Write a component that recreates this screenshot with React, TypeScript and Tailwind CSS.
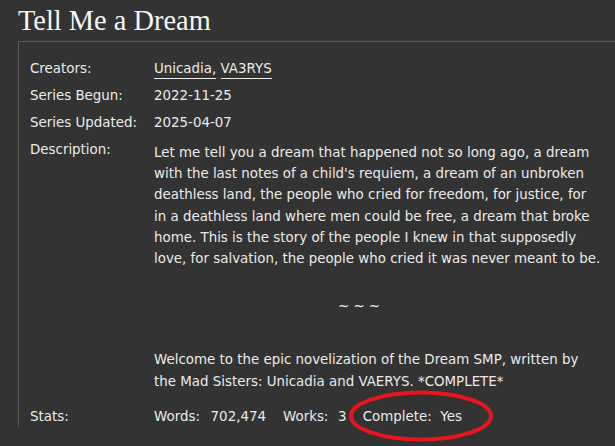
import React from "react";

const descLines = [
  "Let me tell you a dream that happened not so long ago, a dream",
  "with the last notes of a child's requiem, a dream of an unbroken",
  "deathless land, the people who cried for freedom, for justice, for",
  "in a deathless land where men could be free, a dream that broke",
  "home. This is the story of the people I knew in that supposedly",
  "love, for salvation, the people who cried it was never meant to be.",
];

function Row({ label, children, className = "" }: { label: string; children: React.ReactNode; className?: string }) {
  return (
    <div className={`flex ${className}`}>
      <div className="w-[124px] shrink-0">{label}</div>
      <div className="flex-1">{children}</div>
    </div>
  );
}

export default function App() {
  return (
    <div className="w-[615px] h-[446px] overflow-hidden bg-[#333333] text-[#ebebeb] relative">
      <h1
        className="pl-[18px] pt-[2px] text-[28.4px] leading-[37px] text-[#f6f6f6]"
        style={{ fontFamily: '"Liberation Serif", serif' }}
      >
        Tell Me a Dream
      </h1>
      <div
        className="ml-[18px] mt-[2px] border-l border-t border-[#5a5a5a] pl-[11px] pt-[16px] text-[13.4px] leading-[21px] flex flex-col gap-[6px]"
        style={{ fontFamily: '"DejaVu Sans", Verdana, sans-serif' }}
      >
        <Row label="Creators:">
          <span className="border-b border-[#ebebeb] pb-[2px]">Unicadia,</span>{" "}
          <span className="border-b border-[#ebebeb] pb-[2px]">VA3RYS</span>
        </Row>
        <Row label="Series Begun:">2022-11-25</Row>
        <Row label="Series Updated:">2025-04-07</Row>
        <Row label="Description:">
          <div className="pt-[3px] leading-[21.2px]">
            {descLines.map((l, i) => (
              <div key={i} className="whitespace-nowrap">
                {l}
              </div>
            ))}
            <div className="mt-[27px] w-[410px] text-center">~ ~ ~</div>
            <div className="mt-[32px] whitespace-nowrap">
              <div>Welcome to the epic novelization of the Dream SMP, written by</div>
              <div>the Mad Sisters: Unicadia and VAERYS. *COMPLETE*</div>
            </div>
          </div>
        </Row>
        <Row label="Stats:" className="mt-[8px]">
          <div className="flex whitespace-nowrap">
            <span className="w-[56.6px]">Words:</span>
            <span className="w-[72.4px]">702,474</span>
            <span className="w-[55px]">Works:</span>
            <span className="w-[24.7px]">3</span>
            <span className="w-[77.7px]">Complete:</span>
            <span>Yes</span>
          </div>
        </Row>
      </div>
      <svg className="absolute left-[348px] top-[390px]" width="148" height="52" viewBox="0 0 148 52">
        <ellipse cx="73" cy="26" rx="70" ry="23.5" fill="none" stroke="#e8141e" strokeWidth="4" />
      </svg>
    </div>
  );
}
